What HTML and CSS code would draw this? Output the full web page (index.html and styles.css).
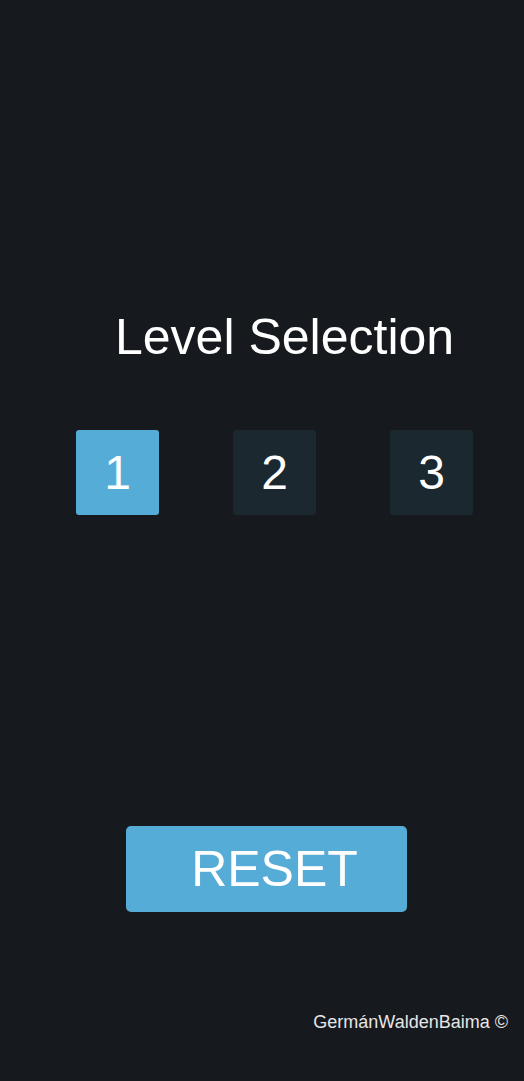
FILE: index.html
```html
<!DOCTYPE html>
<html lang="es">
<head>
<meta charset="utf-8">
<title>Level Selection</title>
<link rel="stylesheet" href="styles.css">
</head>
<body>
<div class="screen">
  <h1 class="title">Level Selection</h1>
  <div class="levels">
    <button class="level level-active">1</button>
    <button class="level">2</button>
    <button class="level">3</button>
  </div>
  <div class="reset-wrap">
    <button class="reset">RESET</button>
  </div>
  <footer class="footer">GermánWaldenBaima ©</footer>
</div>
</body>
</html>
```
FILE: styles.css
```css
html, body {
  margin: 0;
  padding: 0;
  background: #16191e;
}

.screen {
  width: 524px;
  height: 1081px;
  background: #16191e;
  font-family: "Liberation Sans", Arial, sans-serif;
  color: #ffffff;
  display: flex;
  flex-direction: column;
  overflow: hidden;
}

.title {
  margin: 307px 0 0 0;
  padding-left: 115px;
  font-size: 50px;
  line-height: 60px;
  font-weight: normal;
  text-align: left;
}

.levels {
  margin-top: 63px;
  padding-left: 76px;
  display: flex;
  gap: 74px;
}

.level {
  width: 83px;
  height: 85px;
  border: none;
  border-radius: 3px;
  background: #1b2830;
  color: #ffffff;
  font-family: "Liberation Sans", Arial, sans-serif;
  font-size: 48px;
  padding: 0;
  display: flex;
  align-items: center;
  justify-content: center;
}

.level-active {
  background: #55acd6;
}

.reset-wrap {
  margin-top: 311px;
  padding-left: 126px;
  display: flex;
}

.reset {
  width: 281px;
  height: 86px;
  border: none;
  border-radius: 5px;
  background: #55acd6;
  color: #ffffff;
  font-family: "Liberation Sans", Arial, sans-serif;
  font-size: 50px;
  padding: 0 0 0 16px;
  display: flex;
  align-items: center;
  justify-content: center;
}

.footer {
  margin-top: auto;
  margin-bottom: 48px;
  padding-right: 16px;
  text-align: right;
  font-size: 18px;
  line-height: 22px;
  color: #e6e6e6;
}
```
